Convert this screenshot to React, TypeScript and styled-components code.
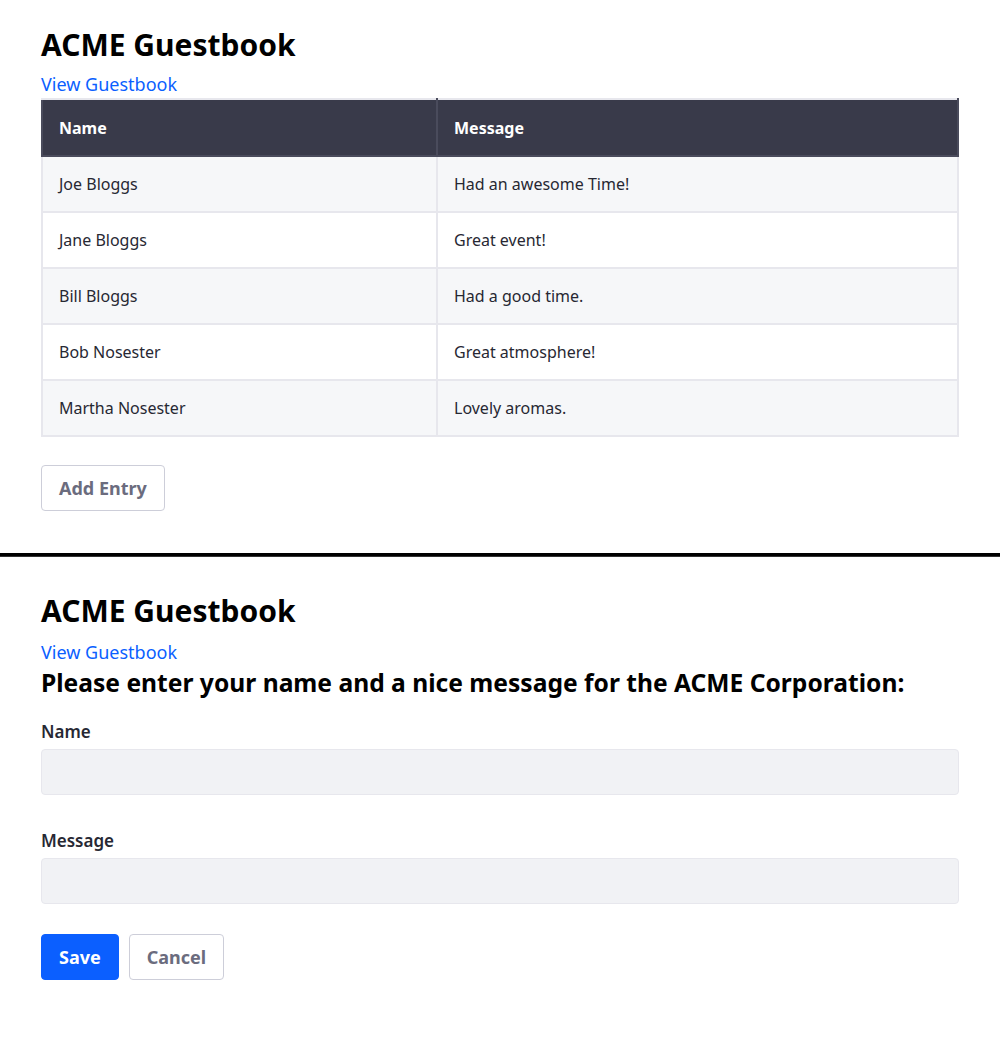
import React from "react";
import styled, { createGlobalStyle } from "styled-components";

const GlobalStyle = createGlobalStyle`
  body {
    margin: 0;
    background: #fff;
    font-family: "Noto Sans", "Open Sans", sans-serif;
    color: #272833;
  }
`;

const Section = styled.section`
  padding: 27px 41px 42px;
`;

const FormSection = styled(Section)`
  padding-top: 36px;
`;

const Divider = styled.hr`
  margin: 0;
  border: 0;
  border-top: 3px solid #000;
  border-bottom: 1px solid #333;
`;

const Title = styled.h1<{ $gap?: number }>`
  margin: 0 0 ${(p) => p.$gap ?? 8}px;
  font-size: 30px;
  line-height: 36px;
  font-weight: 700;
  color: #000;
`;

const NavLink = styled.a`
  display: block;
  color: #0b5fff;
  font-size: 18px;
  line-height: 27px;
  text-decoration: none;
`;

const Prompt = styled.h2`
  margin: 2px 0 0;
  font-size: 24.6px;
  line-height: 29px;
  font-weight: 700;
  color: #000;
`;

const Table = styled.table`
  width: 100%;
  border-collapse: collapse;
  border: 2px solid #e7e7ed;
  font-size: 16px;
`;

const HeadCell = styled.th`
  background: #393a4a;
  color: #fff;
  text-align: left;
  font-weight: 700;
  height: 55px;
  padding: 0 16px;
  border: 2px solid #4a4b5c;
  border-top-color: #e7e7ed;
  &:first-child {
    width: 361px;
  }
`;

const Row = styled.tr<{ $striped: boolean }>`
  background: ${(p) => (p.$striped ? "#f6f7f9" : "#fff")};
`;

const Cell = styled.td`
  height: 54px;
  padding: 0 16px;
  border: 2px solid #e7e7ed;
  color: #272833;
`;

const Button = styled.button<{ $primary?: boolean }>`
  height: 46px;
  padding: 0 17px;
  border-radius: 4px;
  font-family: inherit;
  font-size: 18px;
  font-weight: 700;
  cursor: pointer;
  border: 1px solid ${(p) => (p.$primary ? "#0b5fff" : "#cdced9")};
  background: ${(p) => (p.$primary ? "#0b5fff" : "#fff")};
  color: ${(p) => (p.$primary ? "#fff" : "#6b6c7e")};
`;

const Actions = styled.div<{ $top: number }>`
  display: flex;
  gap: 10px;
  margin-top: ${(p) => p.$top}px;
`;

const Field = styled.div`
  margin-top: 22px;
  & + & {
    margin-top: 33px;
  }
`;

const Label = styled.label`
  display: block;
  font-size: 17px;
  line-height: 26px;
  font-weight: 600;
  color: #272833;
  margin-bottom: 4px;
`;

const Input = styled.input`
  display: block;
  box-sizing: border-box;
  width: 100%;
  height: 46px;
  background: #f1f2f5;
  border: 1px solid #e7e7ed;
  border-radius: 4px;
  font-family: inherit;
  font-size: 16px;
  padding: 0 16px;
`;

const entries = [
  { name: "Joe Bloggs", message: "Had an awesome Time!" },
  { name: "Jane Bloggs", message: "Great event!" },
  { name: "Bill Bloggs", message: "Had a good time." },
  { name: "Bob Nosester", message: "Great atmosphere!" },
  { name: "Martha Nosester", message: "Lovely aromas." },
];

export default function App() {
  return (
    <>
      <GlobalStyle />
      <Section>
        <Title>ACME Guestbook</Title>
        <NavLink href="#">View Guestbook</NavLink>
        <Table>
          <thead>
            <tr>
              <HeadCell>Name</HeadCell>
              <HeadCell>Message</HeadCell>
            </tr>
          </thead>
          <tbody>
            {entries.map((e, i) => (
              <Row key={e.name} $striped={i % 2 === 0}>
                <Cell>{e.name}</Cell>
                <Cell>{e.message}</Cell>
              </Row>
            ))}
          </tbody>
        </Table>
        <Actions $top={28}>
          <Button>Add Entry</Button>
        </Actions>
      </Section>
      <Divider />
      <FormSection>
        <Title $gap={10}>ACME Guestbook</Title>
        <NavLink href="#">View Guestbook</NavLink>
        <Prompt>Please enter your name and a nice message for the ACME Corporation:</Prompt>
        <Field>
          <Label>Name</Label>
          <Input type="text" />
        </Field>
        <Field>
          <Label>Message</Label>
          <Input type="text" />
        </Field>
        <Actions $top={30}>
          <Button $primary>Save</Button>
          <Button>Cancel</Button>
        </Actions>
      </FormSection>
    </>
  );
}
